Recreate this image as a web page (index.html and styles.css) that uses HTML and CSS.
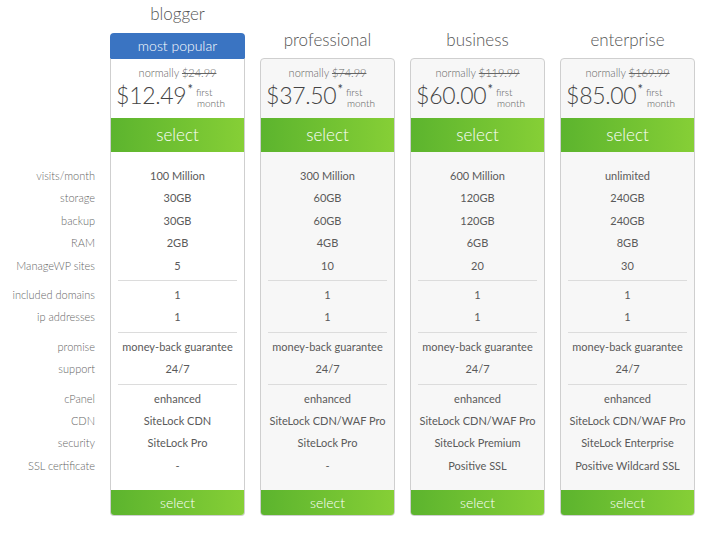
FILE: index.html
```html
<!DOCTYPE html>
<html>
<head>
<meta charset="utf-8">
<link rel="stylesheet" href="styles.css">
</head>
<body>
<div class="table">
  <div class="labels">
    <div class="group">
      <div class="row">visits/month</div>
      <div class="row">storage</div>
      <div class="row">backup</div>
      <div class="row">RAM</div>
      <div class="row">ManageWP sites</div>
    </div>
    <div class="gap"></div>
    <div class="group">
      <div class="row">included domains</div>
      <div class="row">ip addresses</div>
    </div>
    <div class="gap"></div>
    <div class="group">
      <div class="row">promise</div>
      <div class="row">support</div>
    </div>
    <div class="gap"></div>
    <div class="group">
      <div class="row">cPanel</div>
      <div class="row">CDN</div>
      <div class="row">security</div>
      <div class="row">SSL certificate</div>
    </div>
  </div>

  <div class="plan featured">
    <div class="plan-title">blogger</div>
    <div class="badge">most popular</div>
    <div class="card">
      <div class="price">
        <div class="normally">normally <s>$24.99</s></div>
        <div class="amount"><span class="big">$12.49</span><span class="star">*</span><span class="first">first<br><span class="month">month</span></span></div>
      </div>
      <div class="select">select</div>
      <div class="features">
        <div class="group"><div class="row">100 Million</div><div class="row">30GB</div><div class="row">30GB</div><div class="row">2GB</div><div class="row">5</div></div>
        <div class="gap"></div>
        <div class="group"><div class="row">1</div><div class="row">1</div></div>
        <div class="gap"></div>
        <div class="group"><div class="row">money-back guarantee</div><div class="row">24/7</div></div>
        <div class="gap"></div>
        <div class="group"><div class="row">enhanced</div><div class="row">SiteLock CDN</div><div class="row">SiteLock Pro</div><div class="row">-</div></div>
      </div>
      <div class="select small">select</div>
    </div>
  </div>

  <div class="plan">
    <div class="plan-title">professional</div>
    <div class="card">
      <div class="price">
        <div class="normally">normally <s>$74.99</s></div>
        <div class="amount"><span class="big">$37.50</span><span class="star">*</span><span class="first">first<br><span class="month">month</span></span></div>
      </div>
      <div class="select">select</div>
      <div class="features">
        <div class="group"><div class="row">300 Million</div><div class="row">60GB</div><div class="row">60GB</div><div class="row">4GB</div><div class="row">10</div></div>
        <div class="gap"></div>
        <div class="group"><div class="row">1</div><div class="row">1</div></div>
        <div class="gap"></div>
        <div class="group"><div class="row">money-back guarantee</div><div class="row">24/7</div></div>
        <div class="gap"></div>
        <div class="group"><div class="row">enhanced</div><div class="row">SiteLock CDN/WAF Pro</div><div class="row">SiteLock Pro</div><div class="row">-</div></div>
      </div>
      <div class="select small">select</div>
    </div>
  </div>

  <div class="plan">
    <div class="plan-title">business</div>
    <div class="card">
      <div class="price">
        <div class="normally">normally <s>$119.99</s></div>
        <div class="amount"><span class="big">$60.00</span><span class="star">*</span><span class="first">first<br><span class="month">month</span></span></div>
      </div>
      <div class="select">select</div>
      <div class="features">
        <div class="group"><div class="row">600 Million</div><div class="row">120GB</div><div class="row">120GB</div><div class="row">6GB</div><div class="row">20</div></div>
        <div class="gap"></div>
        <div class="group"><div class="row">1</div><div class="row">1</div></div>
        <div class="gap"></div>
        <div class="group"><div class="row">money-back guarantee</div><div class="row">24/7</div></div>
        <div class="gap"></div>
        <div class="group"><div class="row">enhanced</div><div class="row">SiteLock CDN/WAF Pro</div><div class="row">SiteLock Premium</div><div class="row">Positive SSL</div></div>
      </div>
      <div class="select small">select</div>
    </div>
  </div>

  <div class="plan">
    <div class="plan-title">enterprise</div>
    <div class="card">
      <div class="price">
        <div class="normally">normally <s>$169.99</s></div>
        <div class="amount"><span class="big">$85.00</span><span class="star">*</span><span class="first">first<br><span class="month">month</span></span></div>
      </div>
      <div class="select">select</div>
      <div class="features">
        <div class="group"><div class="row">unlimited</div><div class="row">240GB</div><div class="row">240GB</div><div class="row">8GB</div><div class="row">30</div></div>
        <div class="gap"></div>
        <div class="group"><div class="row">1</div><div class="row">1</div></div>
        <div class="gap"></div>
        <div class="group"><div class="row">money-back guarantee</div><div class="row">24/7</div></div>
        <div class="gap"></div>
        <div class="group"><div class="row">enhanced</div><div class="row">SiteLock CDN/WAF Pro</div><div class="row">SiteLock Enterprise</div><div class="row">Positive Wildcard SSL</div></div>
      </div>
      <div class="select small">select</div>
    </div>
  </div>
</div>
</body>
</html>
```

FILE: styles.css
```css
* { box-sizing: border-box; }
html, body { margin: 0; padding: 0; background: #fff; }
body {
  font-family: "Lato", "Open Sans", sans-serif;
  color: #444;
  font-size: 11px;
  font-weight: 300;
}
.table {
  display: flex;
  gap: 15px;
  width: 715px;
}
.labels {
  width: 110px;
  margin-right: -15px;
  padding-right: 15px;
  padding-top: 165px;
  text-align: right;
  color: #666;
  font-size: 11px;
}
.row {
  height: 22.4px;
  line-height: 22.4px;
  white-space: nowrap;
}
.features .row { font-weight: 400; color: #5a5a5a; }
.gap {
  height: 1px;
  margin: 3px 7px;
  background: #dcdcdc;
}
.labels .gap { background: transparent; }
.plan {
  width: 135px;
  display: flex;
  flex-direction: column;
}
.plan-title {
  height: 58px;
  padding-top: 28px;
  line-height: 24px;
  font-size: 17px;
  font-weight: 300;
  text-align: center;
  color: #555;
}
.featured .plan-title {
  height: 33px;
  padding-top: 2px;
}
.badge {
  height: 25px;
  line-height: 25px;
  background: #3a74c2;
  color: #fff;
  text-align: center;
  font-size: 14px;
  font-weight: 300;
  border-radius: 4px 4px 0 0;
}
.card {
  border: 1px solid #cfcfcf;
  border-radius: 4px;
  overflow: hidden;
  background: #f7f7f7;
}
.featured .card {
  background: #fff;
  border-top-color: #3a74c2;
  border-radius: 0 0 4px 4px;
}
.price {
  height: 59px;
  padding-top: 7px;
  text-align: center;
}
.normally {
  line-height: 14px;
  font-size: 11px;
  color: #666;
}
.amount {
  display: flex;
  justify-content: center;
  align-items: flex-start;
  height: 30px;
  margin-left: -14px;
}
.big {
  font-size: 23px;
  line-height: 30px;
  font-weight: 300;
  color: #444;
  letter-spacing: -0.3px;
}
.star {
  font-size: 13px;
  line-height: 18px;
  margin-left: 1px;
  font-weight: 400;
}
.first {
  font-size: 10px;
  line-height: 11px;
  text-align: left;
  margin-left: 3px;
  padding-top: 7px;
  color: #555;
}
.month { margin-left: 1px; }
.select {
  height: 34px;
  line-height: 34px;
  text-align: center;
  color: #fff;
  font-size: 17px;
  font-weight: 300;
  background: linear-gradient(to right, #5cb42e, #86cf36);
}
.select.small {
  height: 25px;
  line-height: 25px;
  font-size: 14px;
}
.features {
  padding: 13px 0;
  text-align: center;
}
```
